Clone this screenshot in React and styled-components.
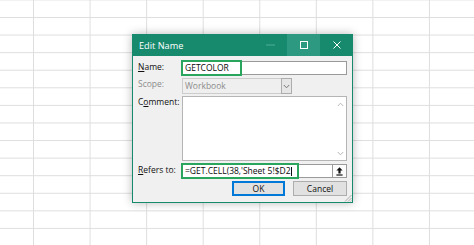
import React from 'react';
import styled, { createGlobalStyle } from 'styled-components';

const GlobalStyle = createGlobalStyle`
  html, body {
    margin: 0;
    padding: 0;
  }
  body {
    width: 474px;
    height: 245px;
    overflow: hidden;
    font-family: "Open Sans", "Noto Sans", sans-serif;
  }
`;

const Sheet = styled.div`
  position: relative;
  width: 474px;
  height: 245px;
  background-color: #ffffff;
  background-image:
    linear-gradient(to right, #dedede 1px, transparent 1px),
    linear-gradient(to bottom, #dedede 1px, transparent 1px);
  background-size: 56.57px 17.58px;
  background-position: 33px 17px;
`;

const Dialog = styled.div`
  position: absolute;
  left: 132px;
  top: 34px;
  width: 221px;
  height: 169px;
  box-sizing: border-box;
  border: 1px solid #178a6e;
  background: #f0f0f0;
  box-shadow: 0 0 9px rgba(0, 0, 0, 0.28);
  display: flex;
  flex-direction: column;
`;

const TitleBar = styled.div`
  height: 22px;
  margin: -1px -1px 0;
  background: #178a6e;
  display: flex;
  align-items: center;
  color: #ffffff;
`;

const Title = styled.div`
  flex: 1;
  padding-left: 7px;
  font-size: 9.2px;
`;

const TitleButton = styled.div`
  width: 33px;
  height: 100%;
  display: flex;
  align-items: center;
  justify-content: center;
  background: ${p => (p.$hover ? '#2d9980' : 'transparent')};
`;

const Body = styled.div`
  flex: 1;
  padding: 5px 5px 0 4px;
  display: flex;
  flex-direction: column;
  position: relative;
`;

const Form = styled.div`
  display: grid;
  grid-template-columns: 45px 1fr;
  grid-template-rows: 17px 18px 68px 14px;
`;

const Label = styled.div`
  font-size: 8.5px;
  line-height: 11px;
  color: ${p => (p.$disabled ? '#8c8c8c' : '#111111')};
  padding-left: 1px;

  u {
    text-decoration-thickness: 1px;
    text-underline-offset: 1px;
  }
`;

const Field = styled.div`
  position: relative;
  display: flex;
  align-items: flex-start;
`;

const TextBox = styled.div`
  box-sizing: border-box;
  height: 14px;
  flex: 1;
  border: 1px solid #9a9a9a;
  background: #ffffff;
  font-size: 8.5px;
  line-height: 12px;
  padding-left: 2px;
  color: #0a0a0a;
  white-space: nowrap;
  display: flex;
  align-items: center;
`;

const Caret = styled.span`
  display: inline-block;
  width: 1px;
  height: 9px;
  background: #111;
  margin-left: 0.5px;
`;

const Highlight = styled.div`
  position: absolute;
  left: -1px;
  top: -1px;
  width: ${p => p.$w}px;
  height: 16px;
  box-sizing: border-box;
  border: 2px solid #2aa55d;
  pointer-events: none;
`;

const Select = styled.div`
  box-sizing: border-box;
  width: 110px;
  height: 16px;
  border: 1px solid #cccccc;
  background: #efefef;
  display: flex;
  align-items: stretch;
`;

const SelectText = styled.div`
  flex: 1;
  font-size: 8.5px;
  line-height: 14px;
  padding-left: 2px;
  color: #8c8c8c;
`;

const SelectButton = styled.div`
  width: 11px;
  box-sizing: border-box;
  border: 1px solid #adadad;
  margin: -1px -1px -1px 0;
  background: #e6e6e6;
  display: flex;
  align-items: center;
  justify-content: center;
`;

const TextArea = styled.div`
  box-sizing: border-box;
  flex: 1;
  height: 65px;
  border: 1px solid #b5b5b5;
  background: #ffffff;
  display: flex;
  justify-content: flex-end;
`;

const ScrollBar = styled.div`
  width: 12px;
  display: flex;
  flex-direction: column;
  justify-content: space-between;
  align-items: center;
  padding: 5px 0 4px;
`;

const PickButton = styled.div`
  box-sizing: border-box;
  width: 15px;
  height: 14px;
  margin-left: -1px;
  border: 1px solid #9a9a9a;
  background: #fbfbfb;
  display: flex;
  align-items: center;
  justify-content: center;
`;

const Buttons = styled.div`
  display: flex;
  justify-content: flex-end;
  gap: 8px;
  margin-top: 3px;
`;

const Button = styled.div`
  box-sizing: border-box;
  width: ${p => p.$w}px;
  height: 15px;
  border: 1px solid ${p => (p.$primary ? '#0078d7' : '#adadad')};
  box-shadow: ${p => (p.$primary ? 'inset 0 0 0 1px #0078d7' : 'none')};
  background: #e1e1e1;
  font-size: 8.5px;
  line-height: 13px;
  text-align: center;
  color: #111111;
`;

const Grip = styled.svg`
  position: absolute;
  right: 0;
  bottom: 0;
`;

const Chevron = ({ up, color = '#b8b8b8' }) => (
  <svg width="7" height="5" viewBox="0 0 7 5">
    <path
      d={up ? 'M0.8 4 L3.5 1.2 L6.2 4' : 'M0.8 1 L3.5 3.8 L6.2 1'}
      fill="none"
      stroke={color}
      strokeWidth="1"
    />
  </svg>
);

export default function App() {
  return (
    <>
      <GlobalStyle />
      <Sheet>
        <Dialog>
          <TitleBar>
            <Title>Edit Name</Title>
            <TitleButton>
              <svg width="9" height="2" viewBox="0 0 9 2">
                <rect x="0" y="0.5" width="9" height="1" fill="#4fae97" />
              </svg>
            </TitleButton>
            <TitleButton $hover>
              <svg width="8" height="8" viewBox="0 0 8 8">
                <rect x="0.5" y="0.5" width="7" height="7" fill="none" stroke="#ffffff" strokeWidth="1" />
              </svg>
            </TitleButton>
            <TitleButton>
              <svg width="8" height="8" viewBox="0 0 8 8">
                <path d="M0.5 0.5 L7.5 7.5 M7.5 0.5 L0.5 7.5" stroke="#ffffff" strokeWidth="1" />
              </svg>
            </TitleButton>
          </TitleBar>
          <Body>
            <Form>
              <Label><u>N</u>ame:</Label>
              <Field>
                <TextBox>GETCOLOR</TextBox>
                <Highlight $w={61} />
              </Field>

              <Label $disabled>Scope:</Label>
              <Field>
                <Select>
                  <SelectText>Workbook</SelectText>
                  <SelectButton>
                    <Chevron color="#777777" />
                  </SelectButton>
                </Select>
              </Field>

              <Label>C<u>o</u>mment:</Label>
              <Field>
                <TextArea>
                  <ScrollBar>
                    <Chevron up />
                    <Chevron />
                  </ScrollBar>
                </TextArea>
              </Field>

              <Label><u>R</u>efers to:</Label>
              <Field>
                <TextBox>
                  =GET.CELL(38,'Sheet 5!$D2<Caret />
                </TextBox>
                <PickButton>
                  <svg width="7" height="9" viewBox="0 0 7 9">
                    <path d="M3.5 0.3 L6.6 3.6 L4.6 3.6 L4.6 6.4 L2.4 6.4 L2.4 3.6 L0.4 3.6 Z" fill="#111111" />
                    <rect x="0.4" y="7.4" width="6.2" height="1.2" fill="#111111" />
                  </svg>
                </PickButton>
                <Highlight $w={118} />
              </Field>
            </Form>
            <Buttons>
              <Button $w={53} $primary>OK</Button>
              <Button $w={54}>Cancel</Button>
            </Buttons>
            <Grip width="8" height="8" viewBox="0 0 8 8">
              <path d="M7.5 1 L1 7.5 M7.5 4 L4 7.5 M7.5 6.5 L6.5 7.5" stroke="#9a9a9a" strokeWidth="0.8" />
            </Grip>
          </Body>
        </Dialog>
      </Sheet>
    </>
  );
}
